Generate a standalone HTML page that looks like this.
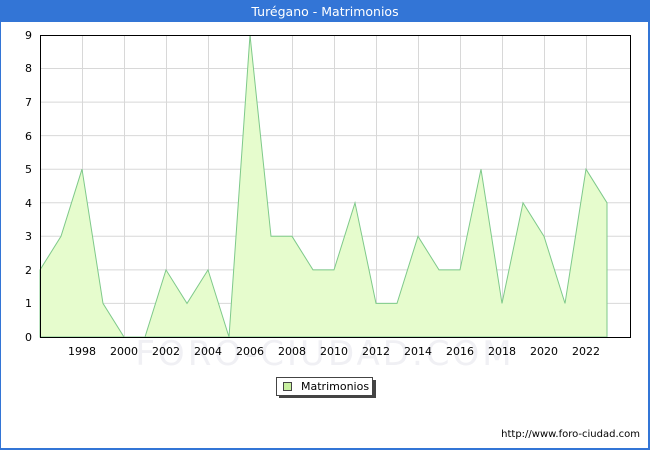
<!DOCTYPE html>
<html><head><style>
body{margin:0;width:650px;height:450px;overflow:hidden;font-family:"DejaVu Sans","Liberation Sans",sans-serif;}
</style></head><body>
<svg width="650" height="450" xmlns="http://www.w3.org/2000/svg" font-family="DejaVu Sans, sans-serif">
<rect x="0" y="0" width="650" height="450" fill="#3375d6"/>
<rect x="1" y="22" width="647" height="426" fill="#fff"/>
<text x="325" y="16" fill="#fff" font-size="12.5" text-anchor="middle">Turégano - Matrimonios</text>
<g stroke="#d8d8d8" stroke-width="1">
<line x1="40" y1="303.4" x2="630" y2="303.4"/><line x1="40" y1="269.9" x2="630" y2="269.9"/>
<line x1="40" y1="236.3" x2="630" y2="236.3"/><line x1="40" y1="202.8" x2="630" y2="202.8"/>
<line x1="40" y1="169.2" x2="630" y2="169.2"/><line x1="40" y1="135.6" x2="630" y2="135.6"/>
<line x1="40" y1="102.1" x2="630" y2="102.1"/><line x1="40" y1="68.5" x2="630" y2="68.5"/>
<line x1="82.5" y1="35" x2="82.5" y2="337"/><line x1="124.5" y1="35" x2="124.5" y2="337"/>
<line x1="166.5" y1="35" x2="166.5" y2="337"/><line x1="208.5" y1="35" x2="208.5" y2="337"/>
<line x1="250.5" y1="35" x2="250.5" y2="337"/><line x1="292.5" y1="35" x2="292.5" y2="337"/>
<line x1="334.5" y1="35" x2="334.5" y2="337"/><line x1="376.5" y1="35" x2="376.5" y2="337"/>
<line x1="418.5" y1="35" x2="418.5" y2="337"/><line x1="460.5" y1="35" x2="460.5" y2="337"/>
<line x1="502.5" y1="35" x2="502.5" y2="337"/><line x1="544.5" y1="35" x2="544.5" y2="337"/>
<line x1="586.5" y1="35" x2="586.5" y2="337"/>
</g>
<text x="325" y="365" font-size="34" fill="#f0f0f4" text-anchor="middle" letter-spacing="3">FORO-CIUDAD.COM</text>
<polygon fill="#e6fccd" stroke="#7ec98a" stroke-width="1" points="40,337 40,269.9 61,236.3 82,169.2 103,303.4 124,337 145,337 166,269.9 187,303.4 208,269.9 229,337 250,35 271,236.3 292,236.3 313,269.9 334,269.9 355,202.8 376,303.4 397,303.4 418,236.3 439,269.9 460,269.9 481,169.2 502,303.4 523,202.8 544,236.3 565,303.4 586,169.2 607,202.8 607,337"/>
<rect x="40.5" y="35.5" width="590" height="302" fill="none" stroke="#000" stroke-width="1"/>
<g font-size="11" fill="#000" text-anchor="end">
<text x="32" y="341">0</text><text x="32" y="307">1</text><text x="32" y="274">2</text>
<text x="32" y="240">3</text><text x="32" y="207">4</text><text x="32" y="173">5</text>
<text x="32" y="140">6</text><text x="32" y="106">7</text><text x="32" y="72">8</text><text x="32" y="39">9</text>
</g>
<g font-size="11" fill="#000" text-anchor="middle">
<text x="82" y="355">1998</text><text x="124" y="355">2000</text><text x="166" y="355">2002</text>
<text x="208" y="355">2004</text><text x="250" y="355">2006</text><text x="292" y="355">2008</text>
<text x="334" y="355">2010</text><text x="376" y="355">2012</text><text x="418" y="355">2014</text>
<text x="460" y="355">2016</text><text x="502" y="355">2018</text><text x="544" y="355">2020</text>
<text x="586" y="355">2022</text>
</g>
<rect x="279" y="380" width="97" height="18" fill="#444"/>
<rect x="276.5" y="377.5" width="96" height="18" fill="#fff" stroke="#444"/>
<rect x="283.5" y="382.5" width="8" height="8" fill="#c8f0a0" stroke="#444"/>
<text x="301" y="390" font-size="11">Matrimonios</text>
<text x="640" y="437" font-size="10" text-anchor="end">http://www.foro-ciudad.com</text>
</svg>
</body></html>
